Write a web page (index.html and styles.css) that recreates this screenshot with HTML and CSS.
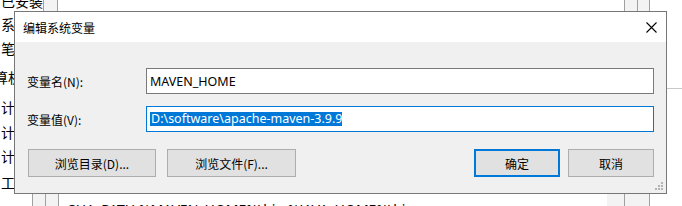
FILE: index.html
```html
<!DOCTYPE html>
<html lang="zh-CN">
<head>
<meta charset="utf-8">
<title>编辑系统变量</title>
<link rel="stylesheet" href="styles.css">
</head>
<body>
<div class="backdrop">
  <div class="side-list">
    <div class="side-item">已安装</div>
    <div class="side-item">系统</div>
    <div class="side-item">笔记</div>
    <div class="side-item shift">算机</div>
    <div class="side-item">计算</div>
    <div class="side-item">计算</div>
    <div class="side-item">计算</div>
    <div class="side-item">工作</div>
  </div>
  <div class="col col-tl"></div>
  <div class="col col-bl"></div>
  <div class="col col-tr"></div>
  <div class="col col-br"></div>
  <div class="hline"></div>
  <div class="under-text">SHA_PATH %MAVEN_HOME%\bin;%JAVA_HOME%\bin</div>
</div>

<div class="dialog">
  <div class="titlebar">
    <span class="title">编辑系统变量</span>
    <svg class="close" width="11" height="11" viewBox="0 0 11 11"><path d="M0.5 0.5 L10.5 10.5 M10.5 0.5 L0.5 10.5" stroke="#000" stroke-width="1.1" fill="none"/></svg>
  </div>
  <div class="body">
    <div class="row">
      <label class="label">变量名(N):</label>
      <div class="field">MAVEN_HOME</div>
    </div>
    <div class="row row2">
      <label class="label">变量值(V):</label>
      <div class="field focus"><span class="sel">D:\software\apache-maven-3.9.9</span></div>
    </div>
    <div class="buttons">
      <button class="btn b-dir">浏览目录(D)...</button>
      <button class="btn b-file">浏览文件(F)...</button>
      <span class="spacer"></span>
      <button class="btn b-ok">确定</button>
      <button class="btn b-cancel">取消</button>
    </div>
  </div>
  <svg class="grip" width="10" height="10" viewBox="0 0 10 10">
    <rect x="7" y="0" width="2" height="2" fill="#b4b4b4"/>
    <rect x="4" y="3" width="2" height="2" fill="#b4b4b4"/>
    <rect x="7" y="3" width="2" height="2" fill="#b4b4b4"/>
    <rect x="1" y="6" width="2" height="2" fill="#b4b4b4"/>
    <rect x="4" y="6" width="2" height="2" fill="#b4b4b4"/>
    <rect x="7" y="6" width="2" height="2" fill="#b4b4b4"/>
  </svg>
</div>
</body>
</html>
```

FILE: styles.css
```css
* { box-sizing: border-box; }
html, body {
  margin: 0;
  padding: 0;
  width: 682px;
  height: 206px;
  overflow: hidden;
  background: #fff;
  font-family: "Noto Sans", "Noto Sans CJK SC", sans-serif;
}

.backdrop {
  position: relative;
  display: flow-root;
  width: 682px;
  height: 206px;
  overflow: hidden;
}

.side-list {
  display: grid;
  grid-template-rows: 22px 24px 24px 33px 27px 24px 24px 28px;
  margin-top: -10px;
  font-family: "Noto Sans CJK SC", sans-serif;
  font-size: 14px;
  color: #000;
  width: 60px;
}
.side-item {
  display: flex;
  align-items: center;
  padding-left: 1px;
  white-space: nowrap;
}
.side-item.shift { margin-left: -7px; }

.col {
  position: absolute;
  background: #f3f3f3;
  border-left: 1px solid #a0a0a0;
  border-right: 1px solid #a0a0a0;
}
.col-tl { left: 43px; top: 0; width: 15px; height: 12px; }
.col-bl { left: 32px; top: 193px; width: 27px; height: 13px; }
.col-bl::after, .col-tr::after, .col-br::after {
  content: "";
  position: absolute;
  top: 0;
  bottom: 0;
  width: 1px;
  background: #a0a0a0;
}
.col-bl::after { left: 12px; }
.col-tr { left: 624px; top: 0; width: 26px; height: 12px; }
.col-tr::after { left: 12px; }
.col-br { left: 607px; top: 193px; width: 43px; height: 13px; border-left: none; }
.col-br::after { left: 17px; }

.hline {
  position: absolute;
  left: 666px;
  top: 88px;
  width: 16px;
  height: 1px;
  background: #c8c8c8;
}

.under-text {
  position: absolute;
  left: 68px;
  top: 200px;
  font-size: 14px;
  color: #000;
  white-space: nowrap;
  font-family: "Noto Sans", sans-serif;
}

.dialog {
  position: absolute;
  left: 14px;
  top: 11px;
  width: 653px;
  height: 183px;
  border: 1px solid #777;
  display: flex;
  flex-direction: column;
  background: #f0f0f0;
}

.titlebar {
  height: 30px;
  background: #fff;
  display: flex;
  align-items: center;
  padding-left: 8px;
  padding-right: 9px;
}
.title {
  font-family: "Noto Sans CJK SC", sans-serif;
  font-size: 12px;
  color: #000;
  flex: 1;
}
.close { display: block; }

.body {
  flex: 1;
  background: #f0f0f0;
  padding: 26px 12px 0 12px;
  font-size: 12px;
  color: #000;
}

.row {
  display: flex;
  align-items: center;
}
.row2 { margin-top: 12px; }

.label {
  width: 119px;
  font-family: "Noto Sans CJK SC", sans-serif;
  font-size: 12px;
}

.field {
  flex: 1;
  height: 26px;
  background: #fff;
  border: 1px solid #7a7a7a;
  padding-left: 3px;
  display: flex;
  align-items: center;
  font-family: "Noto Sans", sans-serif;
  font-size: 12.5px;
  white-space: nowrap;
}
.field.focus { border-color: #0078d7; }
.sel {
  background: #0078d7;
  color: #fff;
  line-height: 14px;
  height: 14px;
  padding-left: 1px;
}

.buttons {
  display: flex;
  margin-top: 17px;
}
.btn {
  height: 28px;
  background: #e1e1e1;
  border: 1px solid #adadad;
  font-family: "Noto Sans CJK SC", sans-serif;
  font-size: 12px;
  color: #000;
  padding: 0;
  margin: 0;
}
.b-dir { width: 128px; margin-left: 1px; }
.b-file { width: 129px; margin-left: 11px; }
.spacer { flex: 1; }
.b-ok { width: 86px; border: 2px solid #0078d7; }
.b-cancel { width: 86px; margin-left: 8px; }

.grip {
  position: absolute;
  right: 2px;
  bottom: 1px;
}
```
